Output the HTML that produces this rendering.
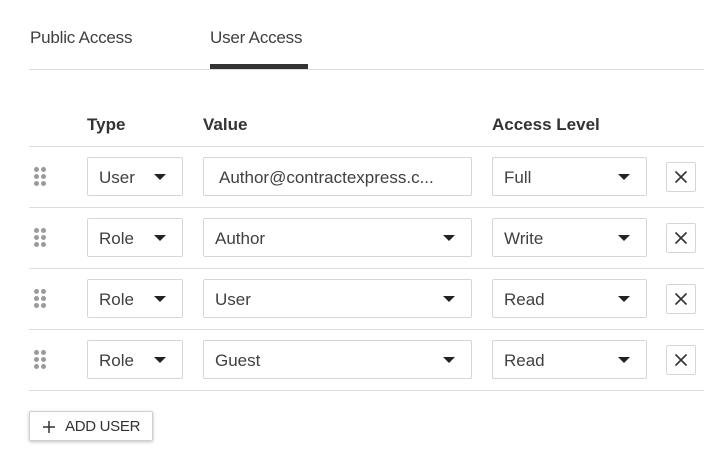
<!DOCTYPE html>
<html><head><style>
body{margin:0;width:718px;height:472px;background:#fff;font-family:"Liberation Sans",sans-serif;color:#333;position:relative;overflow:hidden}
.a{position:absolute}
.tab{font-size:17px;top:28px;color:#404040;letter-spacing:-0.2px}
.sel{position:absolute;border:1px solid #d6d6d6;border-radius:2px;box-sizing:border-box;height:39px;font-size:17px;line-height:39px;padding-left:11px;color:#404040}
.sel .car{position:absolute;right:16px;top:16px;width:0;height:0;border-left:6px solid transparent;border-right:6px solid transparent;border-top:6px solid #222}
.x{position:absolute;width:30px;height:30px;border:1px solid #d6d6d6;border-radius:2px;box-sizing:border-box}
.line{position:absolute;left:29px;width:675px;height:1px;background:#dcdcdc}
.dots{position:absolute;left:34px;width:13px;height:20px}
.dots i{position:absolute;width:5px;height:5px;border-radius:50%;background:#9a9a9a}
.hd{font-size:17px;font-weight:bold;top:115px;color:#333}
</style></head><body>
<div class="a tab" style="left:30px">Public Access</div>
<div class="a tab" style="left:210px">User Access</div>
<div class="a" style="left:210px;top:64px;width:98px;height:5px;background:#333"></div>
<div class="a" style="left:29px;top:69px;width:675px;height:1px;background:#dcdcdc"></div>
<div class="a hd" style="left:87px">Type</div>
<div class="a hd" style="left:203px">Value</div>
<div class="a hd" style="left:492px">Access Level</div>
<div class="line" style="top:146px"></div>
<div class="line" style="top:207px"></div>
<div class="line" style="top:268px"></div>
<div class="line" style="top:329px"></div>
<div class="line" style="top:390px"></div>

<div id="rows"></div>
<script>
var rows=[["User","Author@contractexpress.c...","Full",false],["Role","Author","Write",true],["Role","User","Read",true],["Role","Guest","Read",true]];
var h="";
rows.forEach(function(r,i){var y=157+61*i;
h+='<div class="dots" style="top:'+(y+10)+'px"><i style="left:0;top:0"></i><i style="left:7px;top:0"></i><i style="left:0;top:7px"></i><i style="left:7px;top:7px"></i><i style="left:0;top:14px"></i><i style="left:7px;top:14px"></i></div>';
h+='<div class="sel" style="left:87px;top:'+y+'px;width:96px">'+r[0]+'<span class="car"></span></div>';
h+='<div class="sel" style="left:203px;top:'+y+'px;width:269px;padding-left:'+(r[3]?11:15)+'px">'+r[1]+(r[3]?'<span class="car"></span>':'')+'</div>';
h+='<div class="sel" style="left:492px;top:'+y+'px;width:155px">'+r[2]+'<span class="car"></span></div>';
h+='<div class="x" style="left:666px;top:'+(y+5)+'px"><svg width="28" height="28" style="position:absolute;left:0;top:0"><path d="M8.5 8.5L19.5 19.5M19.5 8.5L8.5 19.5" stroke="#333" stroke-width="1.6"/></svg></div>';
});
document.getElementById("rows").innerHTML=h;
</script>
<div class="a" style="left:29px;top:411px;width:124px;height:30px;border:1px solid #d0d0d0;border-radius:2px;box-sizing:border-box;box-shadow:0 1px 3px rgba(0,0,0,.25);font-size:15px;line-height:29px;color:#333">
<svg width="14" height="14" style="position:absolute;left:12px;top:8px"><path d="M7 1V13M1 7H13" stroke="#333" stroke-width="1.5"/></svg>
<span style="position:absolute;left:35px;letter-spacing:-0.3px">ADD USER</span></div>
</body></html>
